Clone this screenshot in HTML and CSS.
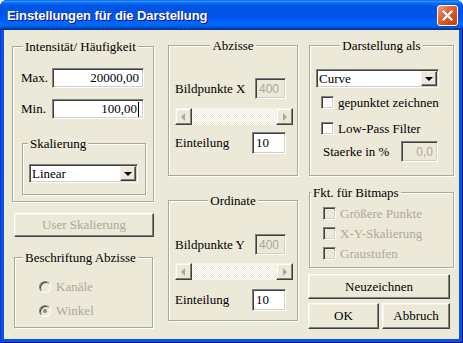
FILE: index.html
```html
<!DOCTYPE html>
<html>
<head>
  <meta charset="utf-8">
  <title>Einstellungen für die Darstellung</title>
  <link rel="stylesheet" href="styles.css">
</head>
<body>
  <div class="window">
    <div class="titlebar">
      <span class="title">Einstellungen für die Darstellung</span>
      <div class="close">
        <svg width="13" height="13" viewBox="0 0 13 13"><path d="M2.5 2.5L10.5 10.5M10.5 2.5L2.5 10.5" stroke="#fff" stroke-width="2.2" stroke-linecap="square"/></svg>
      </div>
    </div>

    <div class="client">
      <!-- linke Spalte -->
      <div class="col col-left">
        <div class="group g-intens">
          <span class="legend lg-intens">Intensität/ Häufigkeit</span>
          <div class="row row-max"><span class="lbl">Max.</span><div class="edit num e-wide">20000,00</div></div>
          <div class="row row-min"><span class="lbl">Min.</span><div class="edit num e-wide">100,00<span class="caret"></span></div></div>
          <div class="group g-skal">
            <span class="legend lg-skal">Skalierung</span>
            <div class="combo combo-skal"><span>Linear</span><span class="drop"></span></div>
          </div>
        </div>

        <div class="btn btn-user dis">User Skalierung</div>

        <div class="group g-beschr">
          <span class="legend lg-beschr">Beschriftung Abzisse</span>
          <div class="opt opt-1 dis"><span class="radio"></span><span>Kanäle</span></div>
          <div class="opt opt-2 dis"><span class="radio on"></span><span>Winkel</span></div>
        </div>
      </div>

      <!-- mittlere Spalte -->
      <div class="col col-mid">
        <div class="group g-abz">
          <span class="legend center">Abzisse</span>
          <div class="line line-px"><span>Bildpunkte X</span><div class="edit num dis e-px">400</div></div>
          <div class="scroll"><span class="sbtn left"></span><span class="track"></span><span class="sbtn right"></span></div>
          <div class="line line-ein"><span>Einteilung</span><div class="edit e-ein">10</div></div>
        </div>

        <div class="group g-ord">
          <span class="legend center">Ordinate</span>
          <div class="line line-px"><span>Bildpunkte Y</span><div class="edit num dis e-px">400</div></div>
          <div class="scroll"><span class="sbtn left"></span><span class="track"></span><span class="sbtn right"></span></div>
          <div class="line line-ein"><span>Einteilung</span><div class="edit e-ein">10</div></div>
        </div>
      </div>

      <!-- rechte Spalte -->
      <div class="col col-right">
        <div class="group g-dar">
          <span class="legend center">Darstellung als</span>
          <div class="combo combo-dar"><span>Curve</span><span class="drop"></span></div>
          <div class="check check-1"><span class="cb"></span><span>gepunktet zeichnen</span></div>
          <div class="check check-2"><span class="cb"></span><span>Low-Pass Filter</span></div>
          <div class="line line-st"><span>Staerke in %</span><div class="edit num dis e-st">0,0</div></div>
        </div>

        <div class="group g-fkt">
          <span class="legend lg-fkt">Fkt. für Bitmaps</span>
          <div class="check bm dis"><span class="cb"></span><span>Größere Punkte</span></div>
          <div class="check bm dis"><span class="cb"></span><span>X-Y-Skalierung</span></div>
          <div class="check bm dis"><span class="cb"></span><span>Graustufen</span></div>
        </div>

        <div class="btn btn-neu">Neuzeichnen</div>
        <div class="btn-row">
          <div class="btn btn-ok">OK</div>
          <div class="btn btn-cancel">Abbruch</div>
        </div>
      </div>
    </div>
  </div>
</body>
</html>
```

FILE: styles.css
```css
* {
  box-sizing: border-box;
}

body {
  margin: 0;
  background: #fff;
  font-family: "Liberation Serif", serif;
  font-size: 13px;
  color: #000;
}

/* Fensterrahmen */

.window {
  width: 463px;
  height: 343px;
  display: flex;
  flex-direction: column;
  border-radius: 7px 7px 0 0;
  overflow: hidden;
  background: #0855dd;
  box-shadow: inset 1px 0 #0831d9, inset -1px -1px #00138c;
}

.titlebar {
  height: 30px;
  flex: none;
  display: flex;
  align-items: center;
  justify-content: space-between;
  padding: 0 5px 0 7px;
  background: linear-gradient(#0058ee 0%, #3593ff 4%, #288eff 6%, #127dff 8%, #036ffc 10%, #0262ee 14%, #0057e5 20%, #0054e3 24%, #0055eb 56%, #005bf5 66%, #026afe 76%, #0062ef 86%, #0052d6 92%, #0040ab 94%, #003092 100%);
}

.title {
  margin-top: 1px;
  font-family: "Liberation Sans", sans-serif;
  font-weight: bold;
  font-size: 13px;
  letter-spacing: -0.1px;
  color: #fff;
  text-shadow: 1px 1px #0f1089;
}

.close {
  width: 21px;
  height: 21px;
  margin-top: 1px;
  display: flex;
  align-items: center;
  justify-content: center;
  border: 1px solid #fff;
  border-radius: 3px;
  background: linear-gradient(135deg, #f2a385 0%, #e2693f 35%, #d24d20 70%, #c0401a 100%);
}

.client {
  flex: 1;
  margin: 0 4px 4px;
  padding-left: 8px;
  display: flex;
  background: #ece9d8;
}

/* Spalten */

.col {
  display: flex;
  flex-direction: column;
  align-items: flex-start;
}

.col-left {
  width: 142px;
}

.col-mid {
  width: 130px;
  margin-left: 14px;
}

.col-right {
  width: 145px;
  margin-left: 11px;
}

/* Gruppenrahmen */

.group {
  display: flex;
  flex-direction: column;
  align-items: flex-start;
  border: 1px solid #aca899;
  box-shadow: inset 1px 1px #fff, 1px 1px #fff;
}

.legend {
  margin: -8px 0 0 8px;
  padding: 0 2px;
  line-height: 15px;
  background: #ece9d8;
}

.legend.center {
  align-self: center;
  margin-left: 0;
}

.lg-intens {
  margin-left: 10px;
}

.lg-skal {
  margin-left: 5px;
}

.lg-fkt {
  margin-left: 1px;
}

.g-intens {
  width: 142px;
  height: 156px;
  margin-top: 16px;
}

.g-skal {
  width: 124px;
  height: 52px;
  margin: 24px 0 0 9px;
}

.g-beschr {
  width: 139px;
  height: 71px;
  margin: 20px 0 0 2px;
}

.g-abz {
  width: 130px;
  height: 131px;
  margin-top: 15px;
}

.g-ord {
  width: 130px;
  height: 121px;
  margin-top: 24px;
}

.g-dar {
  width: 145px;
  height: 131px;
  margin-top: 15px;
}

.g-fkt {
  width: 145px;
  height: 76px;
  margin-top: 16px;
}

/* Zeilen */

.row {
  display: flex;
  align-items: center;
  padding-left: 8px;
}

.row .lbl {
  width: 31px;
}

.row-max {
  margin-top: 14px;
}

.row-min {
  margin-top: 11px;
}

.line {
  align-self: stretch;
  display: flex;
  align-items: center;
  justify-content: space-between;
  padding: 0 11px 0 6px;
}

.g-abz .line-px {
  margin-top: 25px;
}

.g-ord .line-px {
  margin-top: 26px;
}

.g-abz .line-ein {
  margin-top: 7px;
}

.g-ord .line-ein {
  margin-top: 9px;
}

.line-st {
  margin-top: 6px;
  padding: 0 15px 0 13px;
}

/* Eingabefelder */

.edit {
  height: 20px;
  display: flex;
  align-items: center;
  padding: 0 4px;
  border: 1px solid;
  border-color: #808080 #fff #fff #808080;
  box-shadow: inset 1px 1px #404040, inset -1px -1px #d4d0c8;
  background: #fff;
}

.edit.num {
  justify-content: flex-end;
}

.edit.dis {
  background: #ece9d8;
  color: #aca899;
  font-family: "Liberation Sans", sans-serif;
  font-size: 12px;
}

.e-wide {
  width: 92px;
}

.e-px {
  width: 31px;
  height: 21px;
  padding-right: 6px;
}

.e-ein {
  width: 34px;
  height: 22px;
  padding-left: 3px;
}

.e-st {
  width: 37px;
  height: 21px;
  padding-right: 4px;
}

.caret {
  width: 1px;
  height: 15px;
  margin-left: 1px;
  background: #000;
}

/* Kombinationsfelder */

.combo {
  height: 19px;
  display: flex;
  align-items: center;
  padding: 1px 1px 1px 2px;
  border: 1px solid;
  border-color: #808080 #fff #fff #808080;
  box-shadow: inset 1px 1px #404040, inset -1px -1px #d4d0c8;
  background: #fff;
}

.combo-skal {
  width: 109px;
  margin: 13px 0 0 6px;
}

.combo-dar {
  width: 123px;
  margin: 16px 0 0 6px;
}

.drop {
  width: 16px;
  height: 15px;
  margin-left: auto;
  display: flex;
  align-items: center;
  justify-content: center;
  background: #ece9d8;
  border: 1px solid;
  border-color: #f4f2ea #404040 #404040 #f4f2ea;
  box-shadow: inset -1px -1px #808080;
}

.drop::after {
  content: "";
  border: 4px solid transparent;
  border-top: 4px solid #000;
  border-bottom: 0;
  margin-top: 1px;
}

/* Bildlaufleiste */

.scroll {
  width: 118px;
  height: 17px;
  margin-left: 6px;
  display: flex;
}

.g-abz .scroll {
  margin-top: 9px;
}

.g-ord .scroll {
  margin-top: 8px;
}

.track {
  flex: 1;
  background: repeating-conic-gradient(#fff 0 25%, #ece9d8 0 50%) 0 0 / 2px 2px;
}

.sbtn {
  width: 17px;
  height: 17px;
  display: flex;
  align-items: center;
  justify-content: center;
  background: #ece9d8;
  border: 1px solid;
  border-color: #f4f2ea #404040 #404040 #f4f2ea;
  box-shadow: inset -1px -1px #808080, inset 1px 1px #fff;
}

.sbtn::after {
  content: "";
  border: 4px solid transparent;
}

.sbtn.left::after {
  border-left: 0;
  border-right: 4px solid #aca899;
  margin-right: 1px;
}

.sbtn.right::after {
  border-right: 0;
  border-left: 4px solid #aca899;
  margin-left: 1px;
}

/* Kontrollkästchen und Optionsfelder */

.check {
  height: 13px;
  display: flex;
  align-items: center;
  padding-left: 11px;
  line-height: 15px;
}

.check-1 {
  margin-top: 8px;
}

.check-2 {
  margin-top: 13px;
}

.check.bm {
  margin-top: 7px;
  padding-left: 13px;
}

.cb {
  width: 13px;
  height: 13px;
  margin-right: 4px;
  border: 1px solid;
  border-color: #808080 #fff #fff #808080;
  box-shadow: inset 1px 1px #404040, inset -1px -1px #d4d0c8;
  background: #fff;
}

.check.dis .cb {
  background: #ece9d8;
}

.dis {
  color: #aca899;
}

.opt {
  height: 16px;
  display: flex;
  align-items: center;
  padding-left: 24px;
}

.opt-1 {
  margin-top: 14px;
}

.opt-2 {
  margin-top: 8px;
}

.radio {
  width: 12px;
  height: 12px;
  margin-right: 5px;
  display: flex;
  align-items: center;
  justify-content: center;
  border-radius: 50%;
  border: 1px solid;
  border-color: #808080 #fff #fff #808080;
  box-shadow: inset 1px 1px #404040;
  background: #ece9d8;
}

.radio.on::after {
  content: "";
  width: 4px;
  height: 4px;
  border-radius: 50%;
  background: #8c8a80;
}

/* Schaltflächen */

.btn {
  display: flex;
  align-items: center;
  justify-content: center;
  background: #ece9d8;
  border: 1px solid;
  border-color: #fff #404040 #404040 #fff;
  box-shadow: inset -1px -1px #808080, inset 1px 1px #f4f2ea;
}

.btn-user {
  width: 140px;
  height: 24px;
  margin: 11px 0 0 2px;
}

.btn-neu {
  width: 142px;
  height: 25px;
  margin: 6px 0 0 -1px;
}

.btn-row {
  display: flex;
  gap: 3px;
  margin: 4px 0 0 -1px;
}

.btn-ok {
  width: 71px;
  height: 26px;
}

.btn-cancel {
  width: 68px;
  height: 26px;
}
```
